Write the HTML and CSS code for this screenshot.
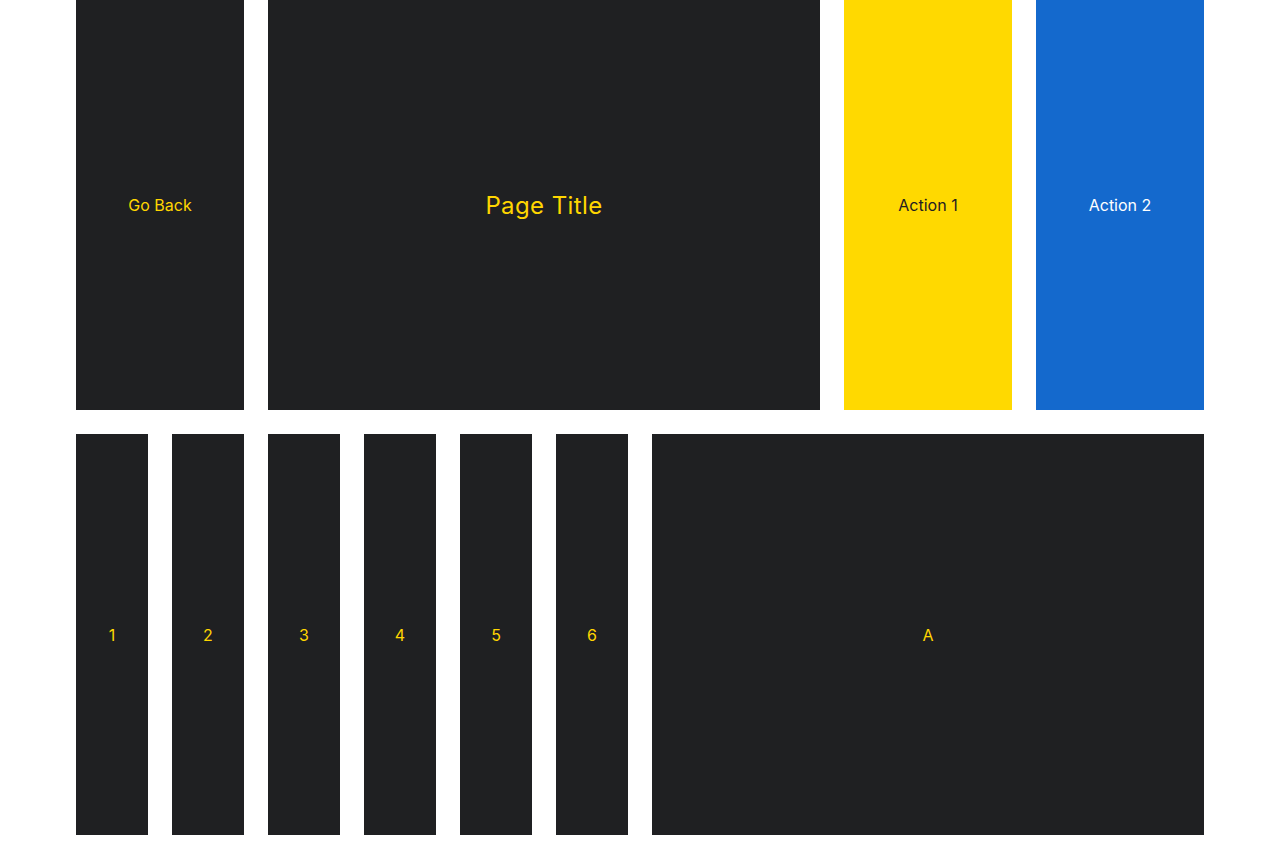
FILE: index.html
```html
<!DOCTYPE html>
<html>
<head>
<meta charset="utf-8">
<link rel="stylesheet" href="styles.css">
</head>
<body>
<div class="page">
  <div class="grid top">
    <div class="cell dark span2 small">Go Back</div>
    <div class="cell dark span6 title">Page Title</div>
    <div class="cell yellow span2 small">Action 1</div>
    <div class="cell blue span2 small">Action 2</div>
  </div>
  <div class="grid bottom">
    <div class="cell dark small">1</div>
    <div class="cell dark small">2</div>
    <div class="cell dark small">3</div>
    <div class="cell dark small">4</div>
    <div class="cell dark small">5</div>
    <div class="cell dark small">6</div>
    <div class="cell dark span6 small">A</div>
  </div>
</div>
</body>
</html>
```
FILE: styles.css
```css
html, body {
  margin: 0;
  padding: 0;
  background: #ffffff;
}
body {
  font-family: "Inter", "Noto Sans", sans-serif;
}
.page {
  padding: 0 76px 24px;
  display: flex;
  flex-direction: column;
  gap: 24px;
}
.grid {
  display: grid;
  grid-template-columns: repeat(12, 1fr);
  gap: 24px;
}
.top { height: 410px; }
.bottom { height: 401px; }
.cell {
  display: flex;
  align-items: center;
  justify-content: center;
}
.span2 { grid-column: span 2; }
.span6 { grid-column: span 6; }
.dark { background: #1f2022; color: #ffd600; }
.yellow { background: #ffd900; color: #1f2022; }
.blue { background: #1469cd; color: #ffffff; }
.small { font-size: 16px; }
.title { font-size: 24px; letter-spacing: 0.4px; }
```
